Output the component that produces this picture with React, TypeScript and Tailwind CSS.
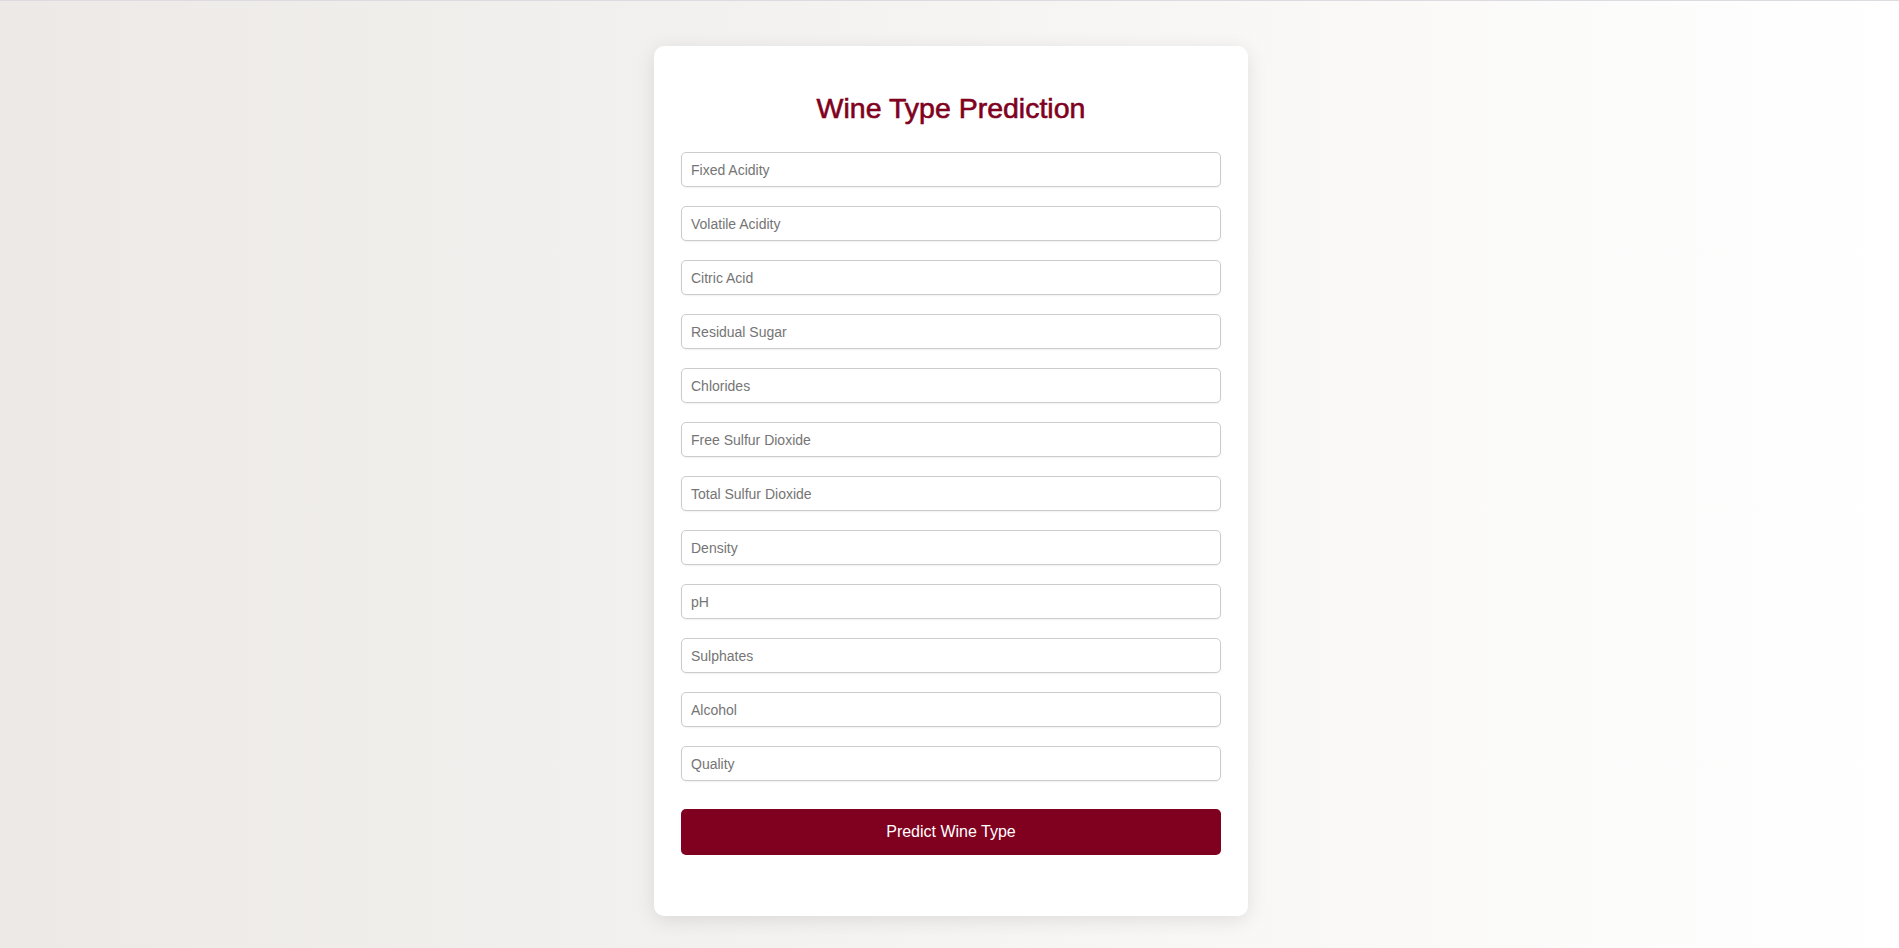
import React from "react";

const fields = [
  "Fixed Acidity",
  "Volatile Acidity",
  "Citric Acid",
  "Residual Sugar",
  "Chlorides",
  "Free Sulfur Dioxide",
  "Total Sulfur Dioxide",
  "Density",
  "pH",
  "Sulphates",
  "Alcohol",
  "Quality",
];

export default function App() {
  return (
    <div
      className="min-h-screen w-full border-t border-[#dedbe0] bg-[linear-gradient(to_right,#ece9e6,#ffffff)] flex justify-center pt-[45px] pl-[3px]"
      style={{ fontFamily: '"Liberation Sans", Arial, sans-serif' }}
    >
      <div className="w-[594px] h-[870px] bg-white rounded-[10px] shadow-[0_4px_20px_rgba(0,0,0,0.1)] px-[27px] pt-[46px] flex flex-col">
        <h2 className="text-[28.5px] leading-[32px] text-center text-[#800020] mb-[28px] [-webkit-text-stroke:0.6px_#800020]">
          Wine Type Prediction
        </h2>
        <form className="flex flex-col gap-[19px]" onSubmit={(e) => e.preventDefault()}>
          {fields.map((f) => (
            <input
              key={f}
              type="text"
              placeholder={f}
              className="w-[540px] h-[35px] border border-[#cccccc] rounded-[5px] px-[9px] text-[14px] font-['Liberation_Sans',Arial,sans-serif] text-[#333] placeholder:text-[#757575] bg-white outline-none shadow-[0_1px_2px_rgba(0,0,0,0.06)]"
            />
          ))}
          <button
            type="submit"
            className="mt-[9px] w-[540px] h-[46px] bg-[#800020] text-white text-[16px] rounded-[5px]"
          >
            Predict Wine Type
          </button>
        </form>
      </div>
    </div>
  );
}
